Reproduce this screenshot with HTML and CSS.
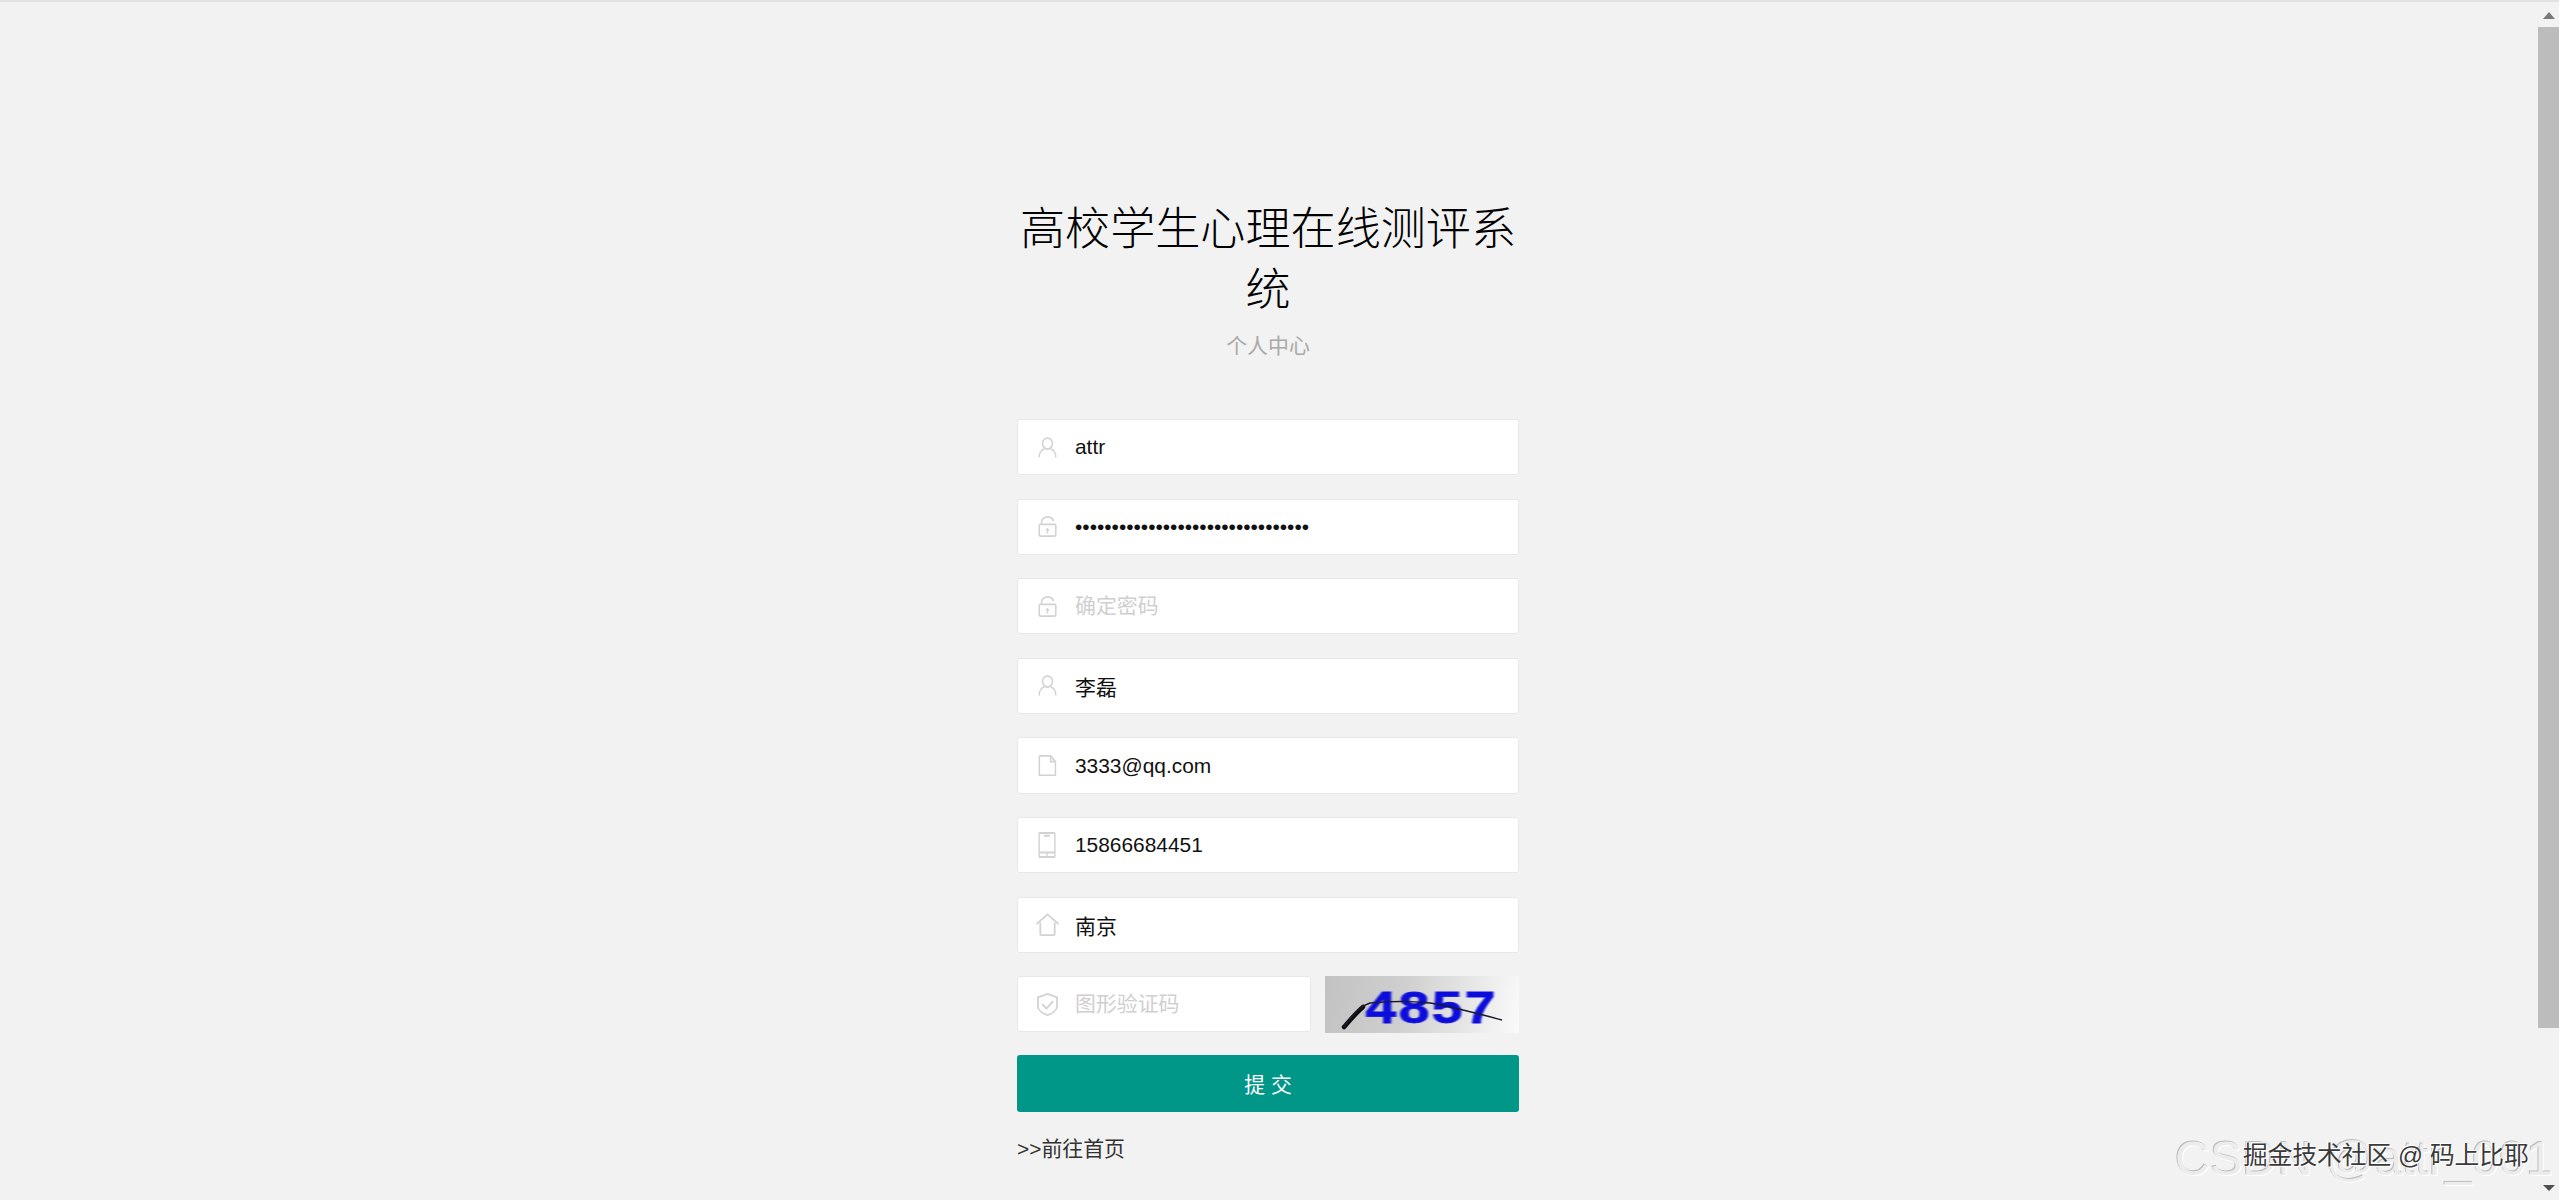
FILE: index.html
```html
<!DOCTYPE html>
<html lang="zh-CN">
<head>
<meta charset="utf-8">
<title>个人中心</title>
<link rel="stylesheet" href="styles.css">
</head>
<body>
<div class="page">
  <main class="main">
    <div class="panel">
      <header class="head">
        <h2 class="title">高校学生心理在线测评系统</h2>
        <p class="sub">个人中心</p>
      </header>
      <form class="form">
        <div class="field">
          <svg class="ico" viewBox="0 0 24 24" preserveAspectRatio="none"><circle cx="12" cy="7.500" r="6.300"/><path d="M1.500 23.500c0-6 3-8.800 6.500-10M22.500 23.500c0-6-3-8.800-6.500-10"/></svg>
          <input class="inp" type="text" value="attr">
        </div>
        <div class="field">
          <svg class="ico" viewBox="0 0 24 24" preserveAspectRatio="none"><rect x="1.500" y="9.500" width="21" height="13.500" rx="1.500"/><path d="M4.500 9.500V7C4.500 3.500 8 1 12 1s6.800 2 7.800 5"/><path class="fill" d="M12 13.500l2.800 3h-1.800V20h-2v-3.500H9.200z"/></svg>
          <input class="inp" type="password" value="aaaaaaaaaaaaaaaaaaaaaaaaaaaaaaaa">
        </div>
        <div class="field">
          <svg class="ico" viewBox="0 0 24 24" preserveAspectRatio="none"><rect x="1.500" y="9.500" width="21" height="13.500" rx="1.500"/><path d="M4.500 9.500V7C4.500 3.500 8 1 12 1s6.800 2 7.800 5"/><path class="fill" d="M12 13.500l2.800 3h-1.800V20h-2v-3.500H9.200z"/></svg>
          <input class="inp" type="password" placeholder="确定密码">
        </div>
        <div class="field">
          <svg class="ico" viewBox="0 0 24 24" preserveAspectRatio="none"><circle cx="12" cy="7.500" r="6.300"/><path d="M1.500 23.500c0-6 3-8.800 6.500-10M22.500 23.500c0-6-3-8.800-6.500-10"/></svg>
          <input class="inp" type="text" value="李磊">
        </div>
        <div class="field">
          <svg class="ico" viewBox="0 0 24 24" preserveAspectRatio="none"><path d="M2.500 1h13.500l6 6.500v15a.800.800 0 0 1-.8.800H2.500a.800.800 0 0 1-.8-.8V1.800a.800.800 0 0 1 .8-.8z"/><path d="M16 1v6.500h6"/></svg>
          <input class="inp" type="text" value="3333@qq.com">
        </div>
        <div class="field">
          <svg class="ico ico-phone" viewBox="0 0 24 26" preserveAspectRatio="none"><rect x="1.500" y="1" width="21" height="24" rx="1"/><path d="M1.500 20.500h21M8 3.800h8M11 22.800h2"/></svg>
          <input class="inp" type="text" value="15866684451">
        </div>
        <div class="field">
          <svg class="ico ico-wide" viewBox="0 0 24 24" preserveAspectRatio="none"><path d="M.5 11.500L12 1.500l11.500 10"/><path d="M4.500 10v12a1 1 0 0 0 1 1h13a1 1 0 0 0 1-1V10"/></svg>
          <input class="inp" type="text" value="南京">
        </div>
        <div class="code-row">
          <div class="field code-field">
            <svg class="ico ico-wide" viewBox="0 0 24 24" preserveAspectRatio="none"><path d="M12 1l10 3.500v9c0 4.500-5 8-10 9.500C7 21.500 2 18 2 13.500v-9z"/><path d="M6.500 11.500l4.500 4.500 7-7.500"/></svg>
            <input class="inp" type="text" placeholder="图形验证码">
          </div>
          <div class="captcha">
            <span class="captcha-text">4857</span>
            <svg class="captcha-line" viewBox="0 0 194 57"><path class="line-thick" d="M19 51C26 43 32 36 38 31"/><path class="line-thin" d="M19 51C26 40 36 30 45 27C65 25 85 25 105 27C125 30 150 37 177 44"/></svg>
          </div>
        </div>
        <button class="submit" type="button">提 交</button>
        <a class="back" href="#">&gt;&gt;前往首页</a>
      </form>
    </div>
  </main>
  <aside class="scrollbar">
    <span class="arrow-up"></span>
    <span class="thumb"></span>
    <span class="arrow-down"></span>
  </aside>
</div>
<div class="wm-csdn">CSDN @attr_001</div>
<div class="wm-juejin">掘金技术社区 @ 码上比耶</div>
</body>
</html>
```

FILE: styles.css
```css
* { box-sizing: border-box; }
html, body { margin: 0; height: 100%; overflow: hidden; }
body {
  background: #f2f2f2;
  font-family: "Liberation Sans", "Noto Sans CJK SC", sans-serif;
  color: #111;
  border-top: 2px solid #e2e2e2;
}
.page { display: flex; height: 1198px; }
.main { flex: 1; display: flex; justify-content: center; }
.panel { width: 502px; padding-top: 197px; margin-right: 2px; }
.head { text-align: center; height: 220px; }
.title { margin: 0; font-size: 45.1px; line-height: 61px; font-weight: 300; color: #000; }
.sub { margin: 10px 0 0; font-size: 20.9px; line-height: 30px; color: #a9a9a9; }
.form { display: flex; flex-direction: column; }
.field {
  display: flex; align-items: center; height: 56.3px; margin-bottom: 23.3px;
  background: #fff; border: 1px solid #e8e8e8; border-radius: 3px; padding-left: 20px;
}
.ico { width: 19px; height: 21px; flex: none; fill: none; stroke: #d2d2d2; stroke-width: 1.9; margin-right: 18px; }
.ico-wide { width: 23px; height: 23px; margin-left: -2px; margin-right: 16px; }
.ico-phone { width: 18px; height: 26px; margin-right: 19px; }
.fill { fill: #d2d2d2; stroke: none; }
.inp {
  flex: 1; min-width: 0; border: 0; outline: 0; padding: 0; background: transparent;
  font: 20.9px "Liberation Sans", "Noto Sans CJK SC", sans-serif; color: #111;
}
.inp::placeholder { color: #cfcfcf; opacity: 1; }
.code-row { display: flex; justify-content: space-between; align-items: stretch; margin-bottom: 22px; }
.code-field { width: 293.5px; margin-bottom: 0; }
.captcha {
  position: relative; width: 194px; height: 57px; display: flex; align-items: center; justify-content: center;
  background: linear-gradient(100deg, #c2c2c2 0%, #cfcfcf 40%, #e6e6e6 72%, #fafafa 100%);
  overflow: hidden;
}
.captcha-text {
  font: bold 46px "Liberation Sans", sans-serif; letter-spacing: 2px; color: #0c0cdc; padding-left: 16px;
  -webkit-text-stroke: .8px #0c0cdc; filter: blur(.7px); transform: translateY(3px) scale(1.2, .96);
}
.captcha-line { position: absolute; inset: 0; width: 100%; height: 100%; fill: none; }
.line-thin { stroke: #1a1a2a; stroke-width: 1.5; }
.line-thick { stroke: #0d0d0d; stroke-width: 4.500; stroke-linecap: round; }
.submit {
  height: 57px; border: 0; border-radius: 3px; background: #009688; color: #fff; padding: 0 0 2px;
  font: 20.9px "Liberation Sans", "Noto Sans CJK SC", sans-serif;
}
.back { margin-top: 22px; font-size: 20.9px; line-height: 30px; color: #333; text-decoration: none; }
.scrollbar { width: 21px; flex: none; display: flex; flex-direction: column; align-items: center; padding-top: 10px; padding-bottom: 9px; }
.arrow-up { width: 0; height: 0; border: 6px solid transparent; border-top: 0; border-bottom: 7px solid #7a7a7a; }
.arrow-down { width: 0; height: 0; border: 6px solid transparent; border-bottom: 0; border-top: 6px solid #505050; margin-top: auto; }
.thumb { width: 21px; height: 1001px; margin-top: 8px; background: #bcbcbc; }
.wm-csdn {
  position: absolute; left: 2175px; top: 1128px; font-size: 48.5px; line-height: 60px; white-space: nowrap;
  color: #ececec; text-shadow: -1px -1px 0 #bcbcbc, 1px 1px 0 #fff; font-family: "Liberation Sans", sans-serif;
}
.wm-juejin {
  position: absolute; left: 2243px; top: 1141px; font-size: 24.7px; line-height: 30px; white-space: nowrap;
  color: #3a3a3a; text-shadow: 1px 1px 0 #fff, -1px -1px 0 #fff;
}
```
